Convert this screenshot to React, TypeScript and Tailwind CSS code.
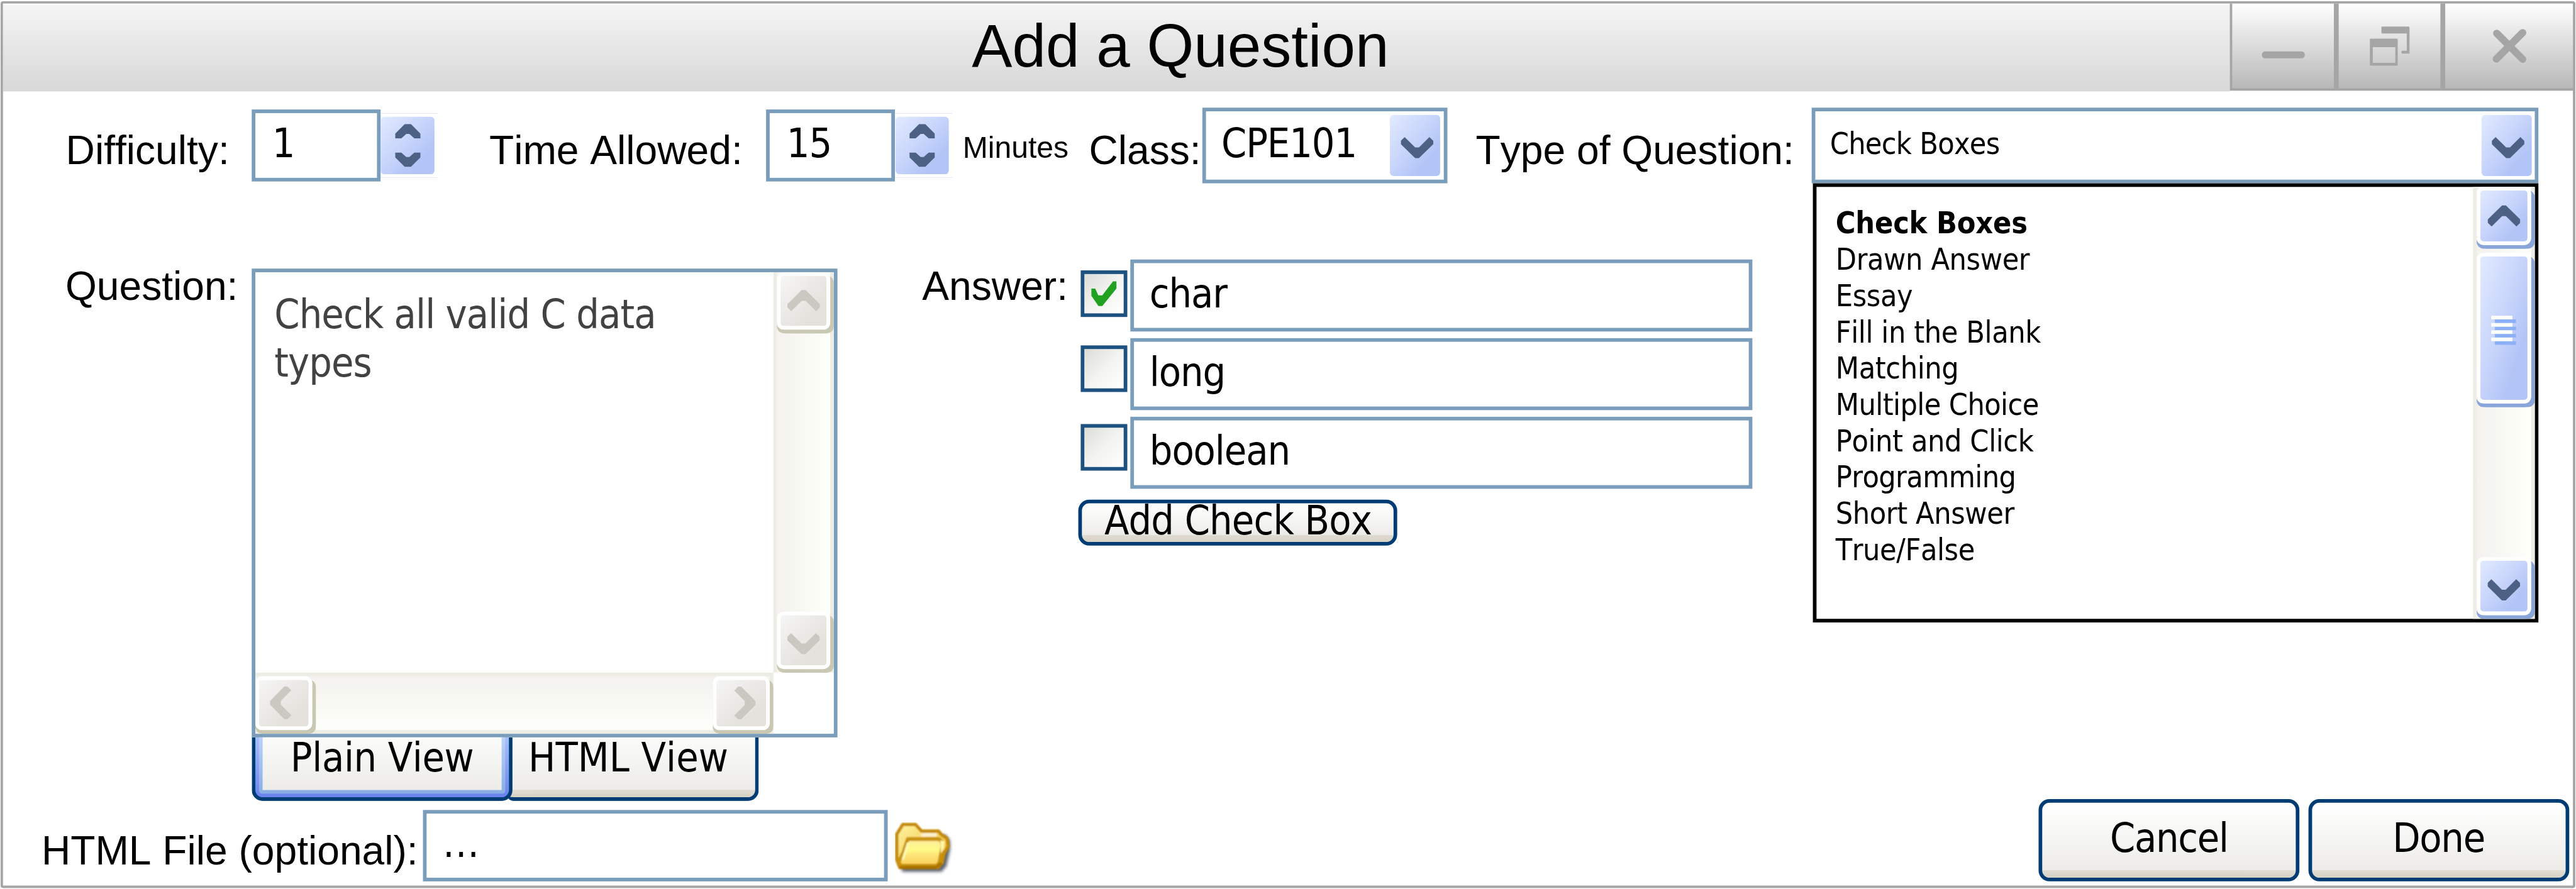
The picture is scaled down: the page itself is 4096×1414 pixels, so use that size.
import type { ReactNode } from "react";

const UI = "font-['DejaVu_Sans_Condensed','DejaVu_Sans',sans-serif] [font-stretch:condensed] [font-kerning:none] whitespace-nowrap";
const BLUE = "bg-[linear-gradient(to_bottom_right,#e1eaff_0%,#c8d5fb_45%,#b3c5f7_75%)]";
const GREY = "bg-[linear-gradient(to_bottom_right,#f6f6f6_0%,#ebe9e6_45%,#e4e1dc_75%)]";

type Dir = "up" | "down" | "left" | "right";

const rotation: Record<Dir, string> = {
  down: "rotate(0 27 27)",
  up: "rotate(180 27 27)",
  left: "rotate(90 27 27)",
  right: "rotate(270 27 27)",
};

function Chevron({ dir, color, className = "" }: { dir: Dir; color: string; className?: string }) {
  return (
    <svg viewBox="0 0 54 54" className={`w-[54px] h-[54px] shrink-0 ${className}`}>
      <path
        transform={rotation[dir]}
        fill={color}
        d="M6.3 9.5 L23.7 26.8 H30 L47.3 9.5 L53.7 15.8 V21.2 L30 44.5 H23.7 L0 21.2 V15.8 Z"
      />
    </svg>
  );
}

function Label({ className, children }: { className: string; children: ReactNode }) {
  return (
    <div className={`shrink-0 font-['Liberation_Sans',Arial,sans-serif] [font-kerning:none] text-[66.67px] leading-none whitespace-nowrap text-black ${className}`}>
      {children}
    </div>
  );
}

function Spinner({ className }: { className: string }) {
  return (
    <div className={`shrink-0 h-[107px] mt-[36px] border-y border-[#dfe6fa] py-[5px] ${className}`}>
      <div className={`w-[88.5px] h-[95px] rounded-[6px] flex flex-col items-center justify-between pt-[12px] pb-[12px] ${BLUE}`}>
        <svg viewBox="0 0 42 24" className="w-[42px] h-[24px]">
          <path fill="#4d6185" d="M16 0 H26 L42 16 V24 H32 L23.5 16.5 H18.5 L10 24 H0 V16 Z" />
        </svg>
        <svg viewBox="0 0 42 24" className="w-[42px] h-[24px]">
          <path fill="#4d6185" d="M16 24 H26 L42 8 V0 H32 L23.5 7.5 H18.5 L10 0 H0 V8 Z" />
        </svg>
      </div>
    </div>
  );
}

function NumberBox({ value }: { value: string }) {
  return (
    <div className={`shrink-0 w-[213px] h-[119px] mt-[30px] border-[6px] border-[#7b9dbc] bg-white pl-[28px] pt-[16.6px] text-[66.67px] leading-none tracking-[-0.015em] ${UI}`}>
      {value}
    </div>
  );
}

function DropButton() {
  return (
    <div className={`shrink-0 w-[83px] h-[101px] rounded-[6px] mt-[6px] mr-[5.5px] pl-[17.5px] pt-[27px] ${BLUE}`}>
      <Chevron dir="down" color="#4d6185" />
    </div>
  );
}

const nudge: Record<Dir, string> = {
  up: "",
  down: "mt-[12px]",
  left: "mr-[11px]",
  right: "ml-[12px]",
};

function ScrollButton({ dir, tone, className }: { dir: Dir; tone: "blue" | "grey"; className: string }) {
  const blue = tone === "blue";
  return (
    <div
      className={`shrink-0 rounded-[11px] border-[6px] border-white flex items-center justify-center ${
        blue ? "shadow-[0_6px_0_#8aa6d9,6px_6px_0_#8aa6d9]" : "shadow-[0_6px_0_#c9c8b3,6px_6px_0_#c9c8b3]"
      } ${blue ? BLUE : GREY} bg-clip-padding ${className}`}
    >
      <Chevron dir={dir} color={blue ? "#4d6185" : "#c9c9c1"} className={nudge[dir]} />
    </div>
  );
}

function PushButton({ className, children }: { className: string; children: ReactNode }) {
  return (
    <div
      className={`shrink-0 border-[6px] border-[#003c74] rounded-[18px] flex justify-center text-[66.67px] leading-none ${UI} ${className}`}
    >
      {children}
    </div>
  );
}

const FACE = "bg-[linear-gradient(to_top,#d6d2c5_0,#e0dcd2_12px,#edece8_12px,#ffffff_100%)]";

function AnswerRow({ text, checked = false, boxClass }: { text: string; checked?: boolean; boxClass: string }) {
  return (
    <div className="flex items-start h-[118.7px]">
      <div className={`shrink-0 w-[76.7px] h-[76.7px] bg-[#1c5180] p-[6px] ${boxClass}`}>
        <div className="w-full h-full bg-[linear-gradient(to_bottom_right,#dcdcd7_0%,#f3f3f1_50%,#ffffff_100%)]">
          {checked && (
            <svg viewBox="18 18 194 194" className="w-full h-full">
              <path fill="#21a121" d="M53 90 H72 L87 124 H107 L160 54 H177 V90 L107 177 H88 L53 126 Z" />
            </svg>
          )}
        </div>
      </div>
      <div className={`shrink-0 ml-[5.6px] w-[1027.4px] h-[118.7px] border-[6px] border-[#7b9dbc] bg-white pl-[25.5px] pt-[16.6px] text-[66.67px] leading-none tracking-[-0.017em] ${UI}`}>
        {text}
      </div>
    </div>
  );
}

function Folder() {
  return (
    <svg viewBox="0 0 96 90" className="shrink-0 ml-[12px] mt-[20px] w-[96px] h-[90px]">
      <defs>
        <linearGradient id="back" x1="0" y1="0" x2="1" y2="1">
          <stop offset="0" stopColor="#fff3a0" />
          <stop offset="1" stopColor="#efb92e" />
        </linearGradient>
        <linearGradient id="front" x1="0" y1="0" x2="0" y2="1">
          <stop offset="0" stopColor="#fdeba0" />
          <stop offset="0.4" stopColor="#fffb86" />
          <stop offset="0.6" stopColor="#ffe478" />
          <stop offset="1" stopColor="#fccf58" />
        </linearGradient>
        <filter id="soft" x="-10%" y="-10%" width="120%" height="120%">
          <feGaussianBlur stdDeviation="1.2" />
        </filter>
        <filter id="shade" x="-20%" y="-20%" width="140%" height="140%">
          <feGaussianBlur stdDeviation="3" />
        </filter>
      </defs>
      <path fill="#3f4658" opacity="0.85" filter="url(#shade)" d="M8 62 L82 20 L91 30 V46 L85 73 L77 82 H12 Z" />
      <g filter="url(#soft)" strokeLinejoin="round">
        <path
          fill="url(#back)"
          stroke="#c48c08"
          strokeWidth="5.5"
          d="M3 62 V20 L13 4 H34 L44 15 H72 L77 21 L86 27 L88 40 L81 52 L78 67 L71 75 H8 Z"
        />
        <path fill="#fdf0cf" d="M43 18 H69 V24 H43 Z" />
        <path
          fill="url(#front)"
          stroke="#c99310"
          strokeWidth="6"
          d="M21 28 H72 Q79 30 78 42 L74 64 Q72 72 66 72 H10 L6 66 L14 50 Z"
        />
        <path fill="#fff6a8" d="M75 30 L82 32 L81 44 L76 52 Z" />
        <path fill="none" stroke="#fffbb8" strokeWidth="4" d="M22 34 L13 62" />
        <path fill="none" stroke="#a87203" strokeWidth="5" d="M8 75 H68 L77 68" />
      </g>
    </svg>
  );
}

const types = [
  { name: "Check Boxes", style: "font-bold tracking-[-0.004em]" },
  { name: "Drawn Answer", style: "" },
  { name: "Essay", style: "" },
  { name: "Fill in the Blank", style: "" },
  { name: "Matching", style: "" },
  { name: "Multiple Choice", style: "tracking-[-0.013em]" },
  { name: "Point and Click", style: "" },
  { name: "Programming", style: "tracking-[-0.013em]" },
  { name: "Short Answer", style: "" },
  { name: "True/False", style: "" },
];

function TitleBar() {
  return (
    <div className="shrink-0 flex items-start h-[145px]">
      <div className="shrink-0 w-[3680px] h-[145px] border-t-2 border-white bg-[linear-gradient(to_bottom,#f5f5f5,#d7d7d7)] pl-[1601px] pt-[17.4px] font-['Liberation_Sans',Arial,sans-serif] text-[100px] leading-none text-black whitespace-nowrap">
        Add a Question
      </div>
      <div className="shrink-0 flex h-[144px] gap-[7.5px] bg-[#a5a5a5] pl-[4px] pb-[4px]">
        <svg viewBox="3689 6 168 140" className="w-[168px] h-[140px] bg-[linear-gradient(to_bottom,#ffffff,#b8b8b8)]">
          <rect x="3738" y="85" width="71" height="11.5" rx="5.5" fill="#a5a5a5" />
        </svg>
        <svg viewBox="3864.5 6 168.5 140" className="w-[168.5px] h-[140px] bg-[linear-gradient(to_bottom,#ffffff,#b8b8b8)]">
          <g fill="#a5a5a5">
            <path d="M3936 44 H3980 Q3981.5 44 3981.5 46 V88.7 H3970 Q3968 88.7 3968 86.4 Q3968 84 3970 84 H3977 V55.3 H3936.5 Q3935 55.3 3935 53.5 V45.5 Q3935 44 3936 44 Z" />
            <path fillRule="evenodd" d="M3917.5 64 H3960.5 Q3962 64 3962 65.5 V107 Q3962 108.5 3960.5 108.5 H3917.5 Q3916 108.5 3916 107 V65.5 Q3916 64 3917.5 64 Z M3920.8 78 V104 H3958 V78 Z" />
          </g>
        </svg>
        <svg viewBox="4040.5 6 211.5 140" className="w-[211.5px] h-[140px] bg-[linear-gradient(to_bottom,#ffffff,#b8b8b8)]">
          <path d="M4125.6 55 L4168.5 98 M4168.5 54 L4125 97.5" stroke="#a5a5a5" strokeWidth="12" strokeLinecap="round" />
        </svg>
      </div>
    </div>
  );
}

export default function App() {
  return (
    <div className="w-[4096px] h-[1414px] overflow-hidden bg-white">
      <div className="origin-top-left scale-[0.96215] w-[4257px] h-[1470px] pt-[2px] pl-[1px] text-black">
        <div className="w-[4255px] h-[1466px] border-4 border-[#a5a5a5] rounded-[4px] bg-white flex flex-col">
          <TitleBar />
          <div className="flex items-start">
            <div className="shrink-0 w-[2988.6px] flex flex-col">
              <div className="flex items-start h-[278px]">
                <Label className="ml-[103.7px] mt-[64px] w-[307px]">Difficulty:</Label>
                <NumberBox value="1" />
                <Spinner className="ml-[0.7px] w-[94px]" />
                <Label className="ml-[85.2px] mt-[64px] w-[457.4px]">Time Allowed:</Label>
                <NumberBox value="15" />
                <Spinner className="ml-[0.7px] w-[94px]" />
                <div className="shrink-0 ml-[17.3px] mt-[67.7px] w-[208.6px] font-['Liberation_Sans',Arial,sans-serif] text-[50px] leading-none whitespace-nowrap">
                  Minutes
                </div>
                <Label className="mt-[64px] w-[187.8px]">Class:</Label>
                <div className="shrink-0 w-[404.6px] h-[125px] mt-[27px] border-[6px] border-[#7b9dbc] bg-white flex items-start justify-between">
                  <div className={`pl-[25px] pt-[19.6px] text-[66.67px] leading-none tracking-[-0.017em] ${UI}`}>CPE101</div>
                  <DropButton />
                </div>
                <Label className="ml-[47px] mt-[64px]">Type of Question:</Label>
              </div>

              <div className="flex items-start h-[910px]">
                <Label className="ml-[103px] mt-[10.7px] w-[308px]">Question:</Label>
                <div className="shrink-0 w-[968.3px] mt-[14.6px] flex flex-col">
                  <div className="h-[775px] border-[6px] border-[#7b9dbc] bg-white flex flex-col">
                    <div className="flex h-[662px]">
                      <div className={`w-[856px] pl-[31.5px] pt-[30px] text-[66.67px] leading-[80px] tracking-[-0.0145em] text-[#424242] ${UI}`}>
                        Check all valid C data
                        <br />
                        types
                      </div>
                      <div className="shrink-0 w-[100.3px] border-x-[6px] border-[#edede5] bg-[linear-gradient(to_right,#f3f2ee,#fefffa)] flex flex-col justify-between pb-[6px]">
                        <ScrollButton dir="up" tone="grey" className="h-[95px]" />
                        <ScrollButton dir="down" tone="grey" className="h-[95px]" />
                      </div>
                    </div>
                    <div className="shrink-0 h-[101px] w-[856px] border-y-[6px] border-r-[6px] border-[#edede5] bg-[linear-gradient(to_bottom,#f3f2ee,#fefffa)] flex justify-between">
                      <ScrollButton dir="left" tone="grey" className="w-[94px]" />
                      <ScrollButton dir="right" tone="grey" className="w-[94px]" />
                    </div>
                  </div>
                  <div className="flex h-[105.5px]">
                    <div className="relative z-10 shrink-0 w-[431px] border-x-[6px] border-b-[6px] border-[#003c74] rounded-b-[18px] bg-[linear-gradient(to_bottom,#a6c0fb,#6982ee)] px-[6px] pb-[6px]">
                      <div className="h-full rounded-b-[5px] bg-[linear-gradient(to_bottom,#bad1fc,#89ade4)] px-[6px] pb-[6px]">
                        <div className={`h-full bg-[linear-gradient(to_bottom,#fbfbfa,#edece8)] flex justify-center pt-[0.5px] text-[66.67px] leading-none tracking-[-0.006em] ${UI}`}>
                          Plain View
                        </div>
                      </div>
                    </div>
                    <div
                      className={`shrink-0 -ml-[10px] w-[417px] border-r-[6px] border-b-[6px] border-[#003c74] rounded-br-[18px] rounded-bl-[12px] bg-[linear-gradient(to_top,#d6d2c5_0,#e0dcd2_12px,#edece8_12px,#fbfbfa_100%)] pl-[36px] pt-[0.5px] text-[66.67px] leading-none tracking-[0.002em] ${UI}`}
                    >
                      HTML View
                    </div>
                  </div>
                </div>
                <Label className="ml-[139.7px] mt-[10.7px] w-[262px]">Answer:</Label>
                <div className="shrink-0 flex flex-col">
                  <div className="flex flex-col gap-[11.3px]">
                    <AnswerRow text="char" checked boxClass="mt-[18px]" />
                    <AnswerRow text="long" boxClass="mt-[12px]" />
                    <AnswerRow text="boolean" boxClass="mt-[12px]" />
                  </div>
                  <PushButton className={`-ml-[3.6px] mt-[18.3px] w-[527px] h-[76px] tracking-[-0.013em] ${FACE}`}>
                    <span className="-mt-[4.5px]">Add Check Box</span>
                  </PushButton>
                </div>
              </div>

              <div className="flex items-start">
                <Label className="ml-[63.5px] mt-[33.9px] w-[630.5px]">HTML File (optional):</Label>
                <div className={`shrink-0 w-[768px] h-[117.5px] border-[6px] border-[#7b9dbc] bg-white pl-[27px] pt-[16px] text-[66.67px] leading-none tracking-[0.02em] ${UI}`}>
                  ...
                </div>
                <Folder />
              </div>
            </div>

            <div className="shrink-0 flex flex-col items-start">
              <div className="w-[1201.5px] h-[125px] mt-[27px] border-[6px] border-[#7b9dbc] bg-white flex items-start justify-between">
                <div className={`pl-[24.5px] pt-[29px] text-[50px] leading-none tracking-[-0.015em] ${UI}`}>Check Boxes</div>
                <DropButton />
              </div>
              <div className="ml-[2px] w-[1199.5px] h-[726px] border-[6px] border-black bg-white flex">
                <ul className={`grow pl-[32px] pt-[30px] text-[50px] leading-[60px] tracking-[-0.009em] ${UI}`}>
                  {types.map((t) => (
                    <li key={t.name} className={t.style}>
                      {t.name}
                    </li>
                  ))}
                </ul>
                <div className="shrink-0 w-[102px] border-x-[6px] border-[#edede5] bg-[linear-gradient(to_right,#f3f2ee,#fefffa)] flex flex-col">
                  <ScrollButton dir="up" tone="blue" className="h-[96px]" />
                  <div className={`shrink-0 mt-[13px] h-[249px] rounded-[11px] border-[6px] border-white shadow-[0_6px_0_#8aa6d9,6px_6px_0_#8aa6d9] bg-clip-padding flex flex-col pl-[18px] pt-[98px] gap-[6px] ${BLUE}`}>
                    <div className="w-[35px] h-[6px] bg-white shadow-[6px_6px_0_#8cb0f8]" />
                    <div className="w-[35px] h-[6px] bg-white shadow-[6px_6px_0_#8cb0f8]" />
                    <div className="w-[35px] h-[6px] bg-white shadow-[6px_6px_0_#8cb0f8]" />
                    <div className="w-[35px] h-[6px] bg-white shadow-[6px_6px_0_#8cb0f8]" />
                  </div>
                  <ScrollButton dir="down" tone="blue" className="mt-auto mb-[6px] h-[96px]" />
                </div>
              </div>
              <div className="flex ml-[375.4px] mt-[291.7px] gap-[14.6px]">
                <PushButton className={`w-[431px] h-[136.3px] pt-[25.5px] tracking-[-0.02em] ${FACE}`}>Cancel</PushButton>
                <PushButton className={`w-[431px] h-[136.3px] pt-[25.5px] tracking-[-0.02em] ${FACE}`}>Done</PushButton>
              </div>
            </div>
          </div>
        </div>
      </div>
    </div>
  );
}
